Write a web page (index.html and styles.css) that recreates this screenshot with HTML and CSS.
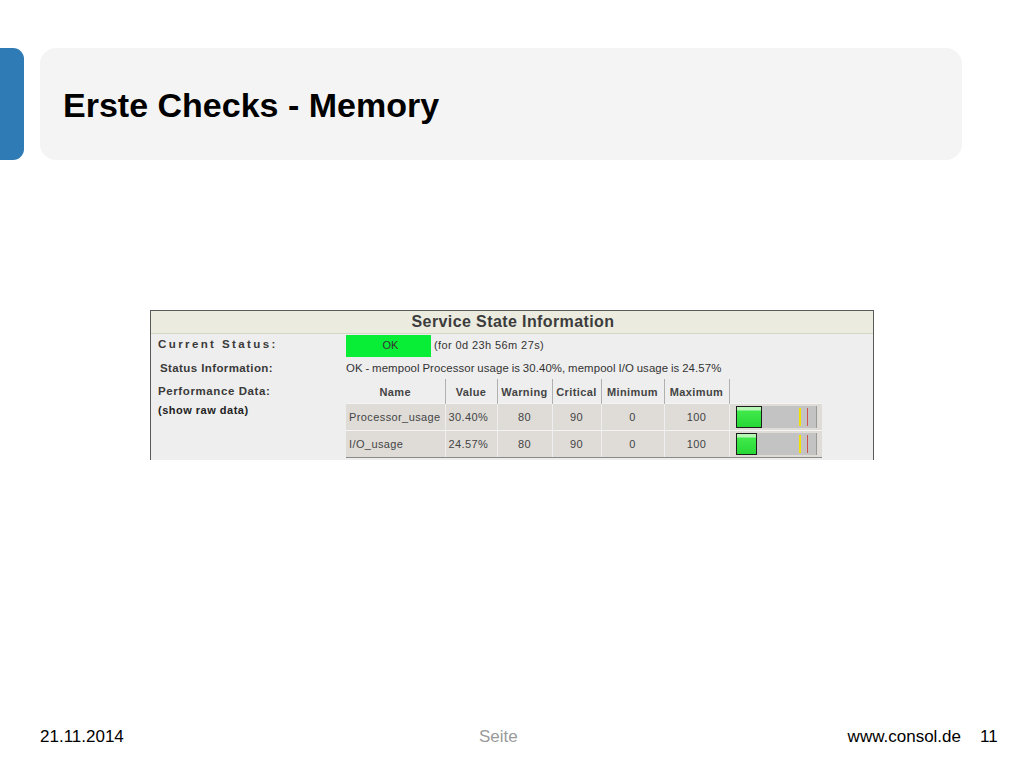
FILE: index.html
```html
<!DOCTYPE html>
<html lang="de">
<head>
<meta charset="utf-8">
<title>Erste Checks - Memory</title>
<link rel="stylesheet" href="styles.css">
</head>
<body>
<div class="slide">
  <header class="head">
    <div class="accent"></div>
    <div class="titlebox"><h1 class="title">Erste Checks - Memory</h1></div>
  </header>

  <section class="shot">
    <div class="shot-head">Service State Information</div>
    <div class="shot-body">
      <div class="labels">
        <div class="lbl lbl-cur">Current Status:</div>
        <div class="lbl lbl-info">Status Information:</div>
        <div class="lbl lbl-perf">Performance Data:</div>
        <div class="raw">(show raw data)</div>
      </div>
      <div class="values">
        <div class="status-row">
          <span class="ok">OK</span>
          <span class="dur">(for 0d 23h 56m 27s)</span>
        </div>
        <div class="info">OK - mempool Processor usage is 30.40%, mempool I/O usage is 24.57%</div>
        <table class="perf">
          <thead>
            <tr>
              <th class="c-name">Name</th>
              <th class="c-val">Value</th>
              <th class="c-warn">Warning</th>
              <th class="c-crit">Critical</th>
              <th class="c-min">Minimum</th>
              <th class="c-max">Maximum</th>
              <th class="c-bar"></th>
            </tr>
          </thead>
          <tbody>
            <tr>
              <td class="t-left">Processor_usage</td>
              <td class="t-left">30.40%</td>
              <td>80</td>
              <td>90</td>
              <td>0</td>
              <td>100</td>
              <td class="barcell"><div class="bar"><div class="fill" style="width:26px"></div><div class="gap"></div><div class="warn"></div><div class="mid"></div><div class="crit"></div><div class="rest"></div></div></td>
            </tr>
            <tr>
              <td class="t-left">I/O_usage</td>
              <td class="t-left">24.57%</td>
              <td>80</td>
              <td>90</td>
              <td>0</td>
              <td>100</td>
              <td class="barcell"><div class="bar"><div class="fill" style="width:21px"></div><div class="gap"></div><div class="warn"></div><div class="mid"></div><div class="crit"></div><div class="rest"></div></div></td>
            </tr>
          </tbody>
        </table>
      </div>
    </div>
  </section>

  <footer class="foot">
    <span class="date">21.11.2014</span>
    <span class="page">Seite</span>
    <span class="site">www.consol.de</span>
    <span class="num">11</span>
  </footer>
</div>
</body>
</html>
```

FILE: styles.css
```css
* { box-sizing: border-box; }
html, body { margin: 0; padding: 0; background: #ffffff; }
body { font-family: "Liberation Sans", Arial, sans-serif; color: #000; }

.slide {
  width: 1024px;
  height: 768px;
  display: flex;
  flex-direction: column;
  overflow: hidden;
}

/* ---------- header ---------- */
.head {
  display: flex;
  margin-top: 48px;
  height: 112px;
}
.accent {
  width: 24px;
  background: #2e7bb6;
  border-radius: 0 11px 11px 0;
}
.titlebox {
  margin-left: 16px;
  width: 922px;
  background: #f4f4f4;
  border-radius: 16px;
  padding: 37px 0 0 23px;
}
.title {
  margin: 0;
  font-size: 34px;
  line-height: 40px;
  font-weight: bold;
  color: #000;
}

/* ---------- screenshot ---------- */
.shot {
  margin: 150px 0 0 150px;
  width: 724px;
  height: 150px;
  border: 1px solid #5a5a5a;
  border-bottom: none;
  background: #eeeeee;
  overflow: hidden;
  color: #333;
}
.shot-head {
  height: 23px;
  background: #ebebdf;
  border-bottom: 1px solid #d6d6c6;
  text-align: center;
  font-weight: bold;
  font-size: 16px;
  line-height: 22px;
  letter-spacing: 0.4px;
  color: #3c3c3c;
  padding-left: 2px;
}
.shot-body {
  display: grid;
  grid-template-columns: 195px 1fr;
  padding-top: 1px;
}
.labels { padding-left: 7px; }
.lbl {
  font-weight: bold;
  font-size: 11.5px;
  color: #3a3a3a;
}
.lbl-cur { height: 22px; line-height: 19px; letter-spacing: 2.4px; }
.lbl-info { height: 22px; line-height: 22px; letter-spacing: 0.4px; padding-left: 2px; }
.lbl-perf { height: 24px; line-height: 24px; letter-spacing: 0.6px; }
.raw {
  font-size: 11px;
  line-height: 14px;
  letter-spacing: 0.5px;
  color: #222;
  font-weight: bold;
}

.status-row {
  height: 22px;
  display: flex;
  align-items: stretch;
}
.ok {
  width: 85px;
  background: #08ee36;
  text-align: center;
  font-size: 11px;
  line-height: 20px;
  color: #333;
  padding-left: 4px;
}
.dur {
  margin-left: 3px;
  font-size: 11px;
  line-height: 20px;
  letter-spacing: 0.4px;
  color: #333;
}
.info {
  height: 22px;
  line-height: 22px;
  font-size: 11.4px;
  letter-spacing: 0.1px;
  color: #333;
  word-spacing: -0.5px;
}

.perf {
  border-collapse: collapse;
  font-size: 11px;
  color: #444;
}
.perf th {
  height: 24px;
  padding: 0;
  font-weight: bold;
  letter-spacing: 0.4px;
  text-align: center;
  border-right: 1px solid #b0b0b0;
  vertical-align: middle;
  padding-top: 3px;
}
.perf th.c-bar { border-right: none; }
.c-name { width: 99px; }
.c-val { width: 52px; }
.c-warn { width: 55px; }
.c-crit { width: 49px; }
.c-min { width: 63px; }
.c-max { width: 65px; }
.c-bar { width: 93px; }

.perf td {
  height: 27px;
  padding: 0;
  background: #dfdcd8;
  border-right: 1px solid #efefef;
  border-top: 1px solid #f4f4f4;
  text-align: center;
  letter-spacing: 0.4px;
  color: #444;
}
.perf tbody tr:last-child td { border-bottom: 1px solid #8a8a8a; }
.perf td.t-left { text-align: left; padding-left: 3px; }
.perf td.barcell { border-right: none; padding-left: 6px; text-align: left; }

.bar {
  display: flex;
  width: 81px;
  height: 22px;
  background: #c3c3c3;
  border-right: 1px solid #9a9a9a;
}
.fill {
  flex: none;
  height: 100%;
  border: 1px solid #1d1d1d;
  background: linear-gradient(#b6f7b6 0, #b6f7b6 3px, #3fe94a 4px, #27d836 100%);
}
.gap { flex: 1; }
.warn, .crit {
  flex: none;
  width: 2px;
  margin: 2px 0;
}
.warn { background: #f2e200; }
.mid { flex: none; width: 6px; }
.crit { width: 1px; background: #cf5050; }
.rest { flex: none; width: 8px; }

/* ---------- footer ---------- */
.foot {
  margin-top: auto;
  margin-bottom: 19px;
  display: flex;
  align-items: baseline;
  height: 24px;
  line-height: 24px;
  font-size: 17px;
  padding-left: 40px;
}
.date { width: 439px; color: #000; }
.page { color: #9a9a9a; }
.site { margin-left: auto; color: #000; }
.num { margin-left: 19px; width: 44px; color: #000; }
```
